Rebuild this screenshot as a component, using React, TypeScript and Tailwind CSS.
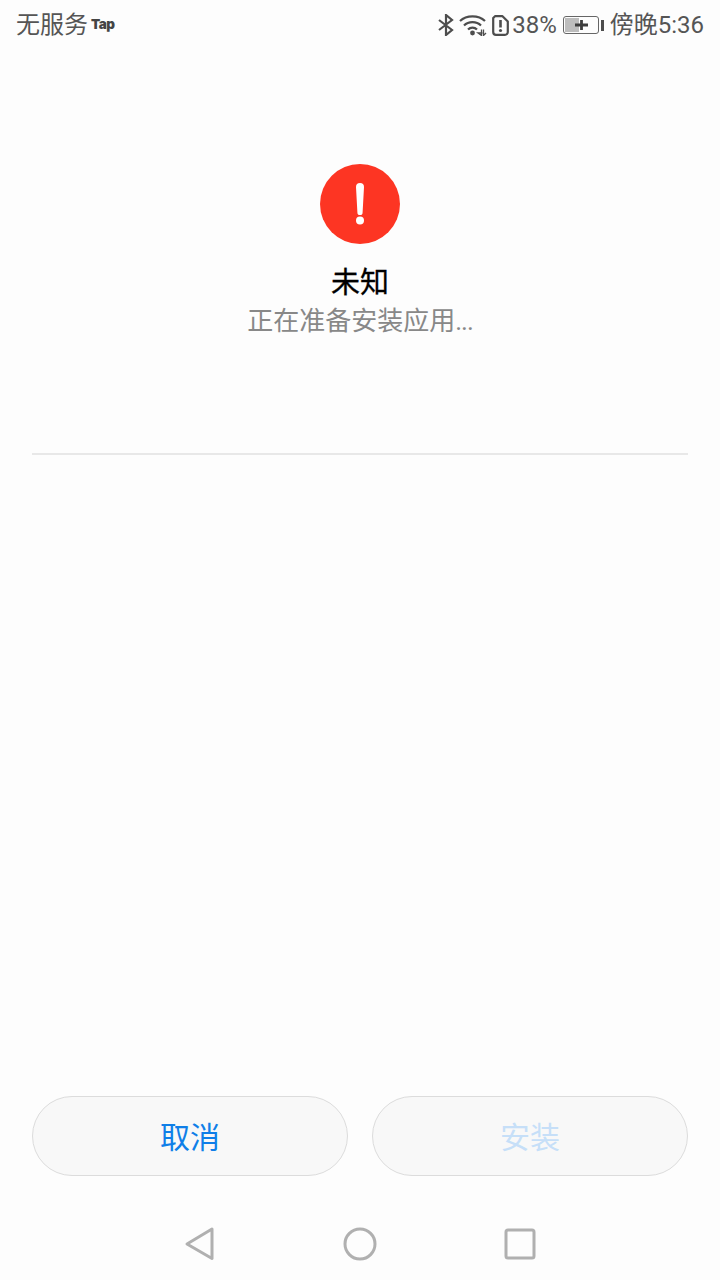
const sans = "font-['Roboto','Noto_Sans_CJK_SC',sans-serif]";

function StatusIcons() {
  return (
    <div className="flex items-center">
      {/* bluetooth */}
      <svg width="16" height="22" viewBox="0 0 16 22" fill="none" stroke="#4d4d4d" strokeWidth="2.2">
        <path d="M1 6l13 10-6 5V1l6 5L1 16" />
      </svg>
      {/* wifi */}
      <svg width="28" height="22" viewBox="0 0 28 22" fill="none" className="ml-[5px]">
        <path d="M1 7C7.5 .8 19.5 .8 26 7" stroke="#4d4d4d" strokeWidth="2.2" />
        <path d="M5 11.5C9.5 7 17.5 7 22 11.5" stroke="#4d4d4d" strokeWidth="2.2" />
        <path d="M9 15.5C11.5 13 15.5 13 18 15.5" stroke="#4d4d4d" strokeWidth="2.2" />
        <circle cx="13.5" cy="19" r="2.4" fill="#4d4d4d" />
        <path d="M22.5 15.5v6l-3.5-2.5h4.5M24.5 15.5v6l2.5-2.5" stroke="#4d4d4d" strokeWidth="1.3" />
      </svg>
      {/* sim with alert */}
      <svg width="17" height="21" viewBox="0 0 17 21" fill="none" className="ml-[5px]">
        <path d="M3 1.2h7.5l5.3 5.3V17a2.8 2.8 0 0 1-2.8 2.8H4A2.8 2.8 0 0 1 1.2 17V3z" stroke="#4d4d4d" strokeWidth="2.2" strokeLinejoin="round" />
        <path d="M8.5 5v7.5" stroke="#4d4d4d" strokeWidth="2.6" />
        <circle cx="8.5" cy="15.5" r="1.6" fill="#4d4d4d" />
      </svg>
    </div>
  );
}

function Battery() {
  return (
    <div className="flex items-center">
      <div className="relative h-[18px] w-[36px] overflow-hidden rounded-[3px] border border-[#666] p-[1px]">
        <div className="h-full w-[14px] bg-[#bdbdbd]" />
        <svg width="13" height="12" viewBox="0 0 13 12" className="absolute left-[11px] top-[2px]">
          <path d="M0 6h13M6.5 1v10" stroke="#3d3d3d" strokeWidth="2.8" />
        </svg>
      </div>
      <div className="ml-[2px] h-[11px] w-[3px] bg-[#4d4d4d]" />
    </div>
  );
}

function ActionButton({ label, color }: { label: string; color: string }) {
  return (
    <button
      type="button"
      className={`h-[80px] flex-1 rounded-[40px] border border-[#dcdcdc] bg-[#f8f8f8] pt-[4px] text-[30px] leading-[40px] ${color}`}
    >
      {label}
    </button>
  );
}

export default function App() {
  return (
    <div className={`flex h-[1280px] w-[720px] flex-col bg-[#fdfdfd] ${sans}`}>
      <header className="flex h-[48px] items-center justify-between pl-[16px] pr-[16px] pt-[2px] text-[24px] leading-none text-[#555]">
        <div className="flex items-center">
          <span>无服务</span>
          <span className="ml-[3px] font-['Inter'] text-[13.5px] font-black tracking-[-0.6px] text-[#444]">Tap</span>
        </div>
        <div className="flex items-center">
          <StatusIcons />
          <span className="ml-[3px]">38%</span>
          <div className="ml-[6px]">
            <Battery />
          </div>
          <span className="ml-[6px]">傍晚5:36</span>
        </div>
      </header>

      <main className="flex flex-1 flex-col px-[32px]">
        <div className="mt-[116px] flex flex-col items-center">
          <svg width="80" height="80" viewBox="0 0 80 80">
            <circle cx="40" cy="40" r="40" fill="#fd3523" />
            <path d="M36 23a4 4 0 0 1 8 0L42.6 48.5a2.6 2.6 0 0 1-5.2 0z" fill="#fff" />
            <circle cx="40" cy="56.5" r="4" fill="#fff" />
          </svg>
          <h1 className="mt-[20px] text-[29px] font-normal leading-[38px] text-black [-webkit-text-stroke:0.3px_#000]">未知</h1>
          <p className="text-[26px] leading-[38px] text-[#888]">
            正在准备安装应用<span className="tracking-[-1px]">...</span>
          </p>
        </div>
        <div className="mt-[113px] h-[2px] bg-[#e8e8e8]" />
        <div className="mt-auto flex gap-[24px] pb-[40px]">
          <ActionButton label="取消" color="text-[#0f7fe8]" />
          <ActionButton label="安装" color="text-[#c6dff8]" />
        </div>
      </main>

      <nav className="mb-[8px] flex h-[56px] items-center justify-center">
        <svg width="32" height="36" viewBox="0 0 32 36" fill="none" stroke="#b0b0b0" strokeWidth="3" strokeLinejoin="round" className="ml-[1px]">
          <path d="M28 3L3 18l25 14.5z" />
        </svg>
        <svg width="36" height="36" viewBox="0 0 36 36" fill="none" stroke="#b0b0b0" strokeWidth="3" className="ml-[126px]">
          <circle cx="18" cy="18" r="15" />
        </svg>
        <svg width="32" height="32" viewBox="0 0 32 32" fill="none" stroke="#b0b0b0" strokeWidth="3" className="ml-[126px] mr-[2px]">
          <rect x="2" y="2" width="28" height="28" rx="2" />
        </svg>
      </nav>
    </div>
  );
}
